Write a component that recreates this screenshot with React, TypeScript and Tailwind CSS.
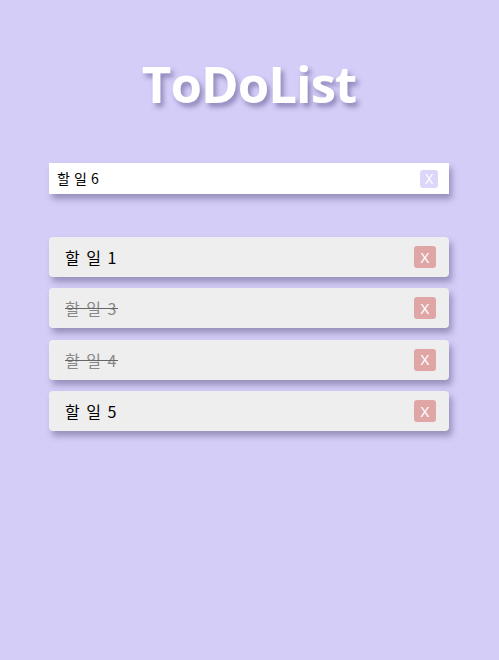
import React from "react";

const items = [
  { text: "할 일 1", done: false },
  { text: "할 일 3", done: true },
  { text: "할 일 4", done: true },
  { text: "할 일 5", done: false },
];

export default function App() {
  return (
    <div
      className="w-[499px] h-[660px] bg-[#d3cdf7] flex flex-col items-start pl-[49px]"
      style={{ fontFamily: '"Noto Sans", "Noto Sans CJK KR", sans-serif' }}
    >
      <h1
        className="mt-[52px] w-[400px] h-[62px] flex items-center justify-center text-[51px] font-bold text-white leading-none tracking-[-1px] [text-shadow:3px_4px_5px_rgba(60,50,110,0.45)]"
        style={{ fontFamily: '"Open Sans", "Noto Sans", sans-serif' }}
      >
        ToDoList
      </h1>
      <div className="mt-[49px] w-[400px] h-[31px] bg-white flex items-center justify-between pl-[8px] pr-[11px] shadow-[3px_5px_6px_rgba(80,70,120,0.45)]">
        <span className="text-[14px] text-black tracking-[0.5px]" style={{ fontFamily: '"Noto Sans CJK KR", sans-serif' }}>할 일 6</span>
        <span className="w-[18px] h-[18px] rounded-[3px] bg-[#dcd6fb] text-white text-[14px] flex items-center justify-center leading-none">
          X
        </span>
      </div>
      <div className="mt-[43px] w-[400px] flex flex-col gap-[11.4px]">
        {items.map((it) => (
          <div
            key={it.text}
            className="h-[40px] rounded-[4px] bg-[#eeeeee] flex items-center justify-between pl-[16px] pr-[13px] shadow-[3px_5px_6px_rgba(80,70,120,0.45)]"
          >
            <span
              className={
                "text-[16px] tracking-[1.5px] " +
                (it.done ? "text-[#888888] line-through decoration-[#666666]" : "text-black")
              }
              style={{ fontFamily: '"Noto Sans CJK KR", sans-serif' }}
            >
              {it.text}
            </span>
            <span className="w-[22px] h-[22px] rounded-[3px] bg-[#e0a6a6] text-white text-[15px] flex items-center justify-center leading-none">
              X
            </span>
          </div>
        ))}
      </div>
    </div>
  );
}
